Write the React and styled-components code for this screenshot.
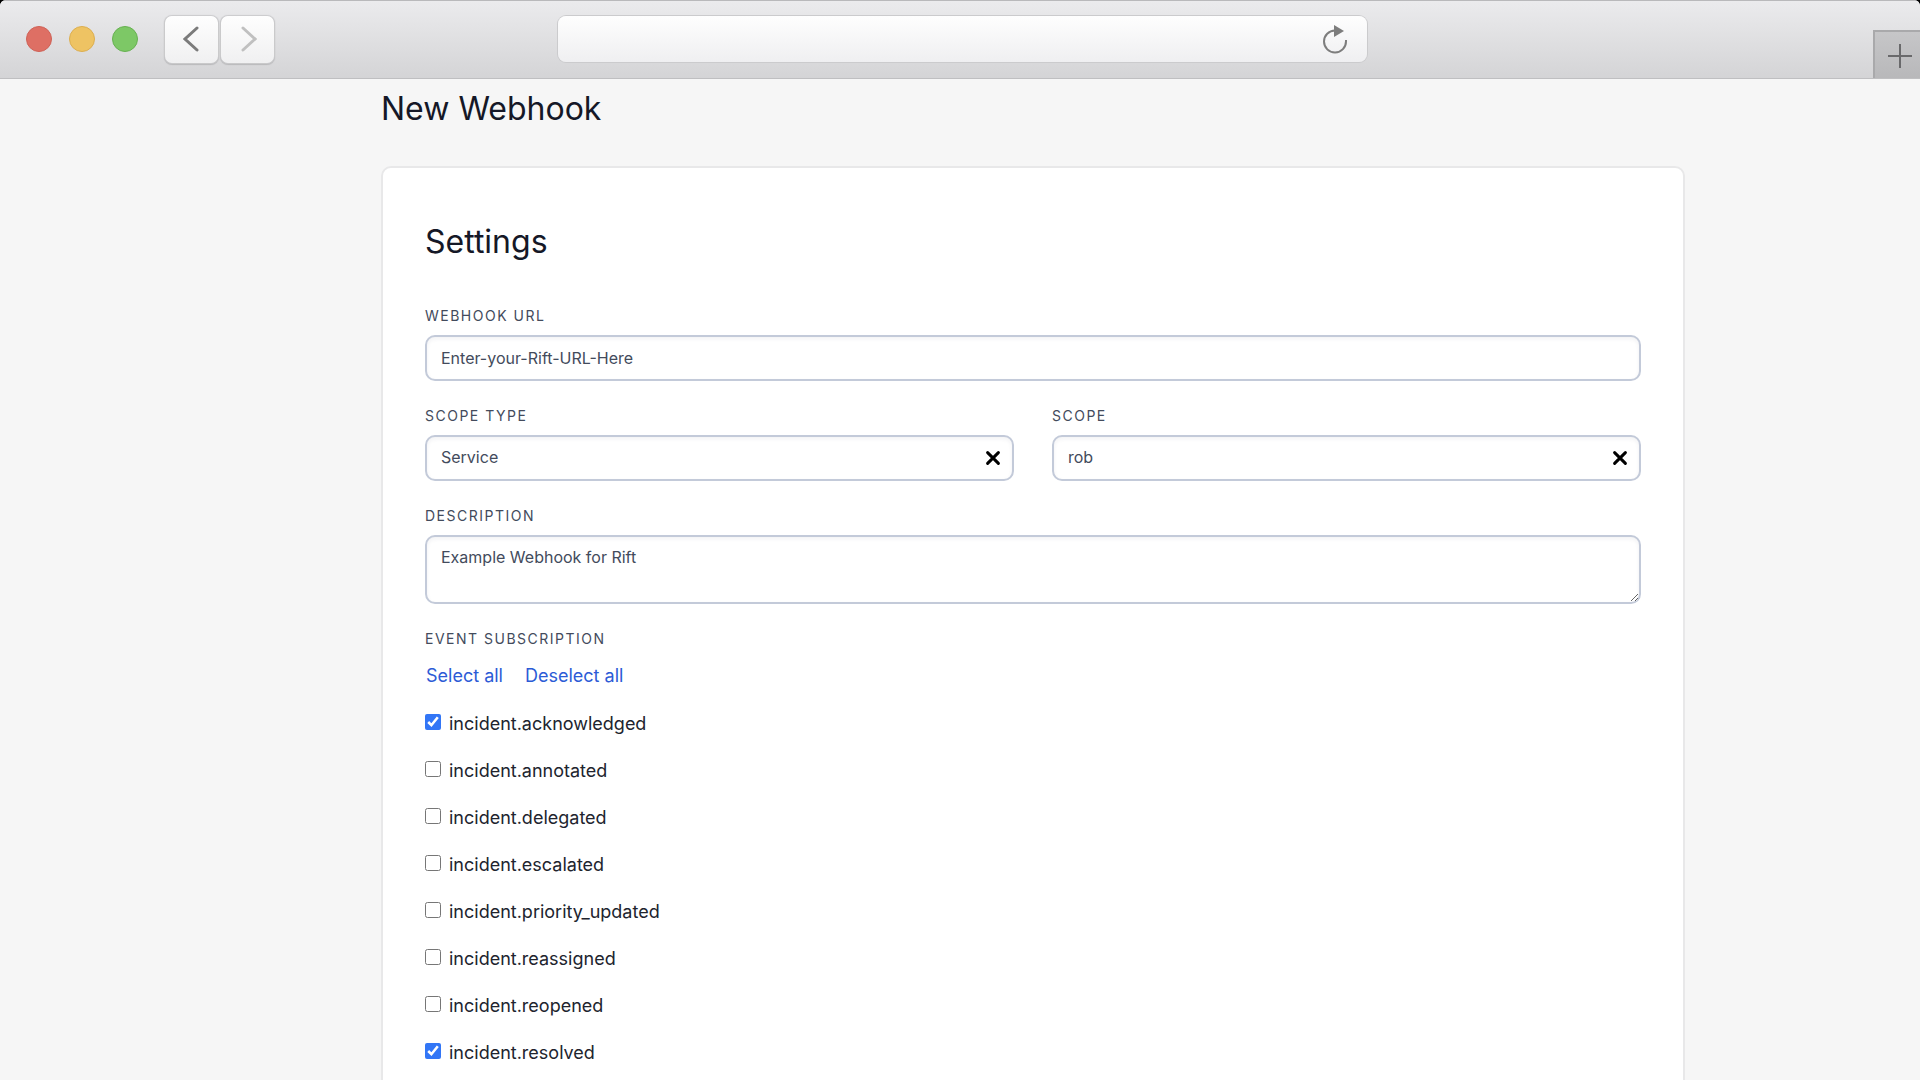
import React, { useState } from "react";
import styled, { createGlobalStyle } from "styled-components";

const GlobalStyle = createGlobalStyle`
  *, *::before, *::after { box-sizing: border-box; }
  body { margin: 0; background: #000; }
  body, button, input, select, textarea { font-family: Inter, Roboto, "Liberation Sans", sans-serif; }
`;

const Window = styled.div`
  display: flex;
  flex-direction: column;
  height: 100vh;
  overflow: hidden;
  border-radius: 6px 6px 0 0;
  background: #f6f6f6;
`;

const TitleBar = styled.header`
  display: grid;
  grid-template-columns: 1fr minmax(0, 809px) 1fr;
  flex: none;
  height: 79px;
  padding-left: 4px;
  background: linear-gradient(#ebebed, #d4d4d6);
  border-top: 1px solid #b9b9bb;
  border-bottom: 1px solid #bfbfc1;
`;

const Controls = styled.div`
  display: flex;
  align-items: center;
  padding-left: 22px;
`;

const Lights = styled.div`
  display: flex;
  gap: 17px;
  margin: 0 27px 2px 0;
`;

const Light = styled.span`
  width: 26px;
  height: 26px;
  border-radius: 50%;
  background: ${(p) => p.$fill};
  border: 1px solid ${(p) => p.$edge};
`;

const History = styled.nav`
  display: flex;
  gap: 3px;
`;

const HistoryButton = styled.button`
  display: flex;
  align-items: center;
  justify-content: center;
  width: 53px;
  height: 47px;
  padding: 0 2px 2px 0;
  border: 0;
  border-radius: 7px;
  background: linear-gradient(#fefefe, #f0f0f1);
  box-shadow: 0 0 1px 1px #cbcbcd, 0 1px 1px 1px #b8b8ba;
  color: #7b7b7b;
  &:disabled { padding: 0 0 2px 2px; color: #c0c0c0; }
`;

const AddressBar = styled.div`
  display: flex;
  align-self: start;
  height: 46px;
  margin-top: 15px;
  border-radius: 8px;
  background: linear-gradient(#fefefe, #efeff1);
  box-shadow: 0 0 0 1px #cbcbcd;
`;

const AddressInput = styled.input`
  flex: 1;
  min-width: 0;
  padding: 0 16px;
  border: 0;
  background: transparent;
  font-size: 16px;
  outline: none;
`;

const ReloadButton = styled.button`
  display: flex;
  align-items: center;
  justify-content: center;
  width: 64px;
  padding: 0;
  border: 0;
  background: transparent;
  color: #7d7d7d;
`;

const TabArea = styled.div`
  display: flex;
  justify-content: flex-end;
  align-items: flex-end;
`;

const NewTabButton = styled.button`
  display: flex;
  align-items: center;
  justify-content: center;
  width: 47px;
  height: 48px;
  padding: 2px 0 0 4px;
  border: solid #a9a9ab;
  border-width: 2px 0 0 2px;
  background: linear-gradient(#c6c6c8, #b8b8ba);
  color: #69696b;
`;

const Page = styled.main`
  flex: 1;
  min-height: 0;
  overflow: hidden;
  padding: 6px 235px 0 381px;
`;

const PageTitle = styled.h1`
  margin: 0 0 33px;
  color: #151827;
  font-size: 32px;
  font-weight: 400;
  line-height: 48px;
`;

const Card = styled.form`
  padding: 50px 42px;
  border: 2px solid #e8e8e9;
  border-radius: 10px;
  background: #fff;
`;

const CardTitle = styled.h2`
  margin: 0 0 40px;
  color: #151827;
  font-size: 32px;
  font-weight: 400;
  line-height: 48px;
`;

const Fields = styled.div`
  display: flex;
  flex-direction: column;
  gap: 25px;
`;

const FieldRow = styled.div`
  display: grid;
  grid-template-columns: 1fr 1fr;
  gap: 38px;
`;

const Field = styled.div`
  display: flex;
  flex-direction: column;
  gap: 9px;
  min-width: 0;
`;

const Label = styled.label`
  color: #434b5c;
  font-size: 14px;
  font-weight: 400;
  line-height: 20px;
  letter-spacing: 1.5px;
  text-transform: uppercase;
`;

const control = `
  width: 100%;
  border: 2px solid #c3cad9;
  border-radius: 10px;
  background: #fff;
  box-shadow: inset 0 2px 4px rgba(30, 40, 70, 0.06);
  color: #434b5c;
  font-size: 16px;
  line-height: 24px;
  outline: none;
`;

const TextInput = styled.input`
  ${control}
  height: 46px;
  padding: 0 14px;
`;

const SelectBox = styled.div`
  position: relative;
`;

const Select = styled.select`
  ${control}
  display: block;
  height: 46px;
  padding: 0 48px 2px 14px;
  appearance: none;
`;

const ClearButton = styled.button`
  position: absolute;
  top: 0;
  right: 0;
  display: flex;
  align-items: center;
  justify-content: center;
  width: 42px;
  height: 46px;
  padding: 0;
  border: 0;
  background: transparent;
  color: #000;
`;

const TextArea = styled.textarea`
  ${control}
  display: block;
  height: 69px;
  padding: 8px 14px;
  resize: vertical;
`;

const Events = styled.fieldset`
  margin: 0;
  padding: 0;
  border: 0;
`;

const Legend = styled(Label).attrs({ as: "legend" })`
  padding: 0;
`;

const Actions = styled.div`
  display: flex;
  gap: 22px;
  margin: 14px 0 22px;
  padding-left: 1px;
`;

const LinkButton = styled.button`
  padding: 0;
  border: 0;
  background: transparent;
  color: #2c5bd6;
  font-size: 18px;
  line-height: 26px;
`;

const EventList = styled.ul`
  margin: 0;
  padding: 0;
  list-style: none;
`;

const EventItem = styled.li`
  height: 47px;
`;

const EventLabel = styled.label`
  display: inline-flex;
  gap: 8px;
  color: #21242e;
  font-size: 18px;
  line-height: 26px;
`;

const Checkbox = styled.input`
  width: 16px;
  height: 16px;
  margin: 3px 0 0;
  accent-color: #3276f6;
`;

function Chevron({ flip }) {
  return (
    <svg width="16" height="28" viewBox="0 0 16 28" fill="none" stroke="currentColor" strokeWidth="3" strokeLinecap="round" aria-hidden="true">
      <path d={flip ? "M2 3L14 14L2 25" : "M14 3L2 14L14 25"} />
    </svg>
  );
}

function ReloadIcon() {
  return (
    <svg width="26" height="30" viewBox="0 0 26 30" aria-hidden="true">
      <path d="M13 6.5A11 11 0 1 0 24 17.3V16" fill="none" stroke="currentColor" strokeWidth="2" />
      <path d="M12 1L22 7L12 13Z" fill="currentColor" />
    </svg>
  );
}

function PlusIcon() {
  return (
    <svg width="24" height="24" viewBox="0 0 24 24" stroke="currentColor" strokeWidth="2" aria-hidden="true">
      <path d="M12 0V24M0 12H24" />
    </svg>
  );
}

function ClearIcon() {
  return (
    <svg width="16" height="16" viewBox="0 0 16 16" stroke="currentColor" strokeWidth="3" strokeLinecap="round" aria-hidden="true">
      <path d="M2.6 2.6L13.4 13.4M13.4 2.6L2.6 13.4" />
    </svg>
  );
}

function ClearableSelect({ id, label, option }) {
  const [value, setValue] = useState(option);
  return (
    <Field>
      <Label htmlFor={id}>{label}</Label>
      <SelectBox>
        <Select id={id} value={value} onChange={(e) => setValue(e.target.value)}>
          <option value="" />
          <option value={option}>{option}</option>
        </Select>
        <ClearButton type="button" aria-label={`Clear ${label}`} onClick={() => setValue("")}>
          <ClearIcon />
        </ClearButton>
      </SelectBox>
    </Field>
  );
}

const EVENTS = [
  "incident.acknowledged",
  "incident.annotated",
  "incident.delegated",
  "incident.escalated",
  "incident.priority_updated",
  "incident.reassigned",
  "incident.reopened",
  "incident.resolved",
];

export default function App() {
  const [selected, setSelected] = useState(["incident.acknowledged", "incident.resolved"]);
  const toggle = (name) =>
    setSelected((list) => (list.includes(name) ? list.filter((n) => n !== name) : [...list, name]));

  return (
    <>
      <GlobalStyle />
      <Window>
        <TitleBar>
          <Controls>
            <Lights>
              <Light $fill="#de6f64" $edge="#cf6156" />
              <Light $fill="#eec363" $edge="#dcae4f" />
              <Light $fill="#7dc866" $edge="#66b150" />
            </Lights>
            <History aria-label="History">
              <HistoryButton aria-label="Back"><Chevron /></HistoryButton>
              <HistoryButton aria-label="Forward" disabled><Chevron flip /></HistoryButton>
            </History>
          </Controls>
          <AddressBar>
            <AddressInput type="text" aria-label="Address" />
            <ReloadButton aria-label="Reload"><ReloadIcon /></ReloadButton>
          </AddressBar>
          <TabArea>
            <NewTabButton aria-label="New tab"><PlusIcon /></NewTabButton>
          </TabArea>
        </TitleBar>
        <Page>
          <PageTitle>New Webhook</PageTitle>
          <Card onSubmit={(e) => e.preventDefault()}>
            <CardTitle>Settings</CardTitle>
            <Fields>
              <Field>
                <Label htmlFor="url">Webhook URL</Label>
                <TextInput id="url" type="text" defaultValue="Enter-your-Rift-URL-Here" />
              </Field>
              <FieldRow>
                <ClearableSelect id="scope-type" label="Scope Type" option="Service" />
                <ClearableSelect id="scope" label="Scope" option="rob" />
              </FieldRow>
              <Field>
                <Label htmlFor="description">Description</Label>
                <TextArea id="description" defaultValue="Example Webhook for Rift" />
              </Field>
              <Events>
                <Legend>Event Subscription</Legend>
                <Actions>
                  <LinkButton type="button" onClick={() => setSelected(EVENTS)}>Select all</LinkButton>
                  <LinkButton type="button" onClick={() => setSelected([])}>Deselect all</LinkButton>
                </Actions>
                <EventList>
                  {EVENTS.map((name) => (
                    <EventItem key={name}>
                      <EventLabel>
                        <Checkbox type="checkbox" checked={selected.includes(name)} onChange={() => toggle(name)} />
                        {name}
                      </EventLabel>
                    </EventItem>
                  ))}
                </EventList>
              </Events>
            </Fields>
          </Card>
        </Page>
      </Window>
    </>
  );
}
